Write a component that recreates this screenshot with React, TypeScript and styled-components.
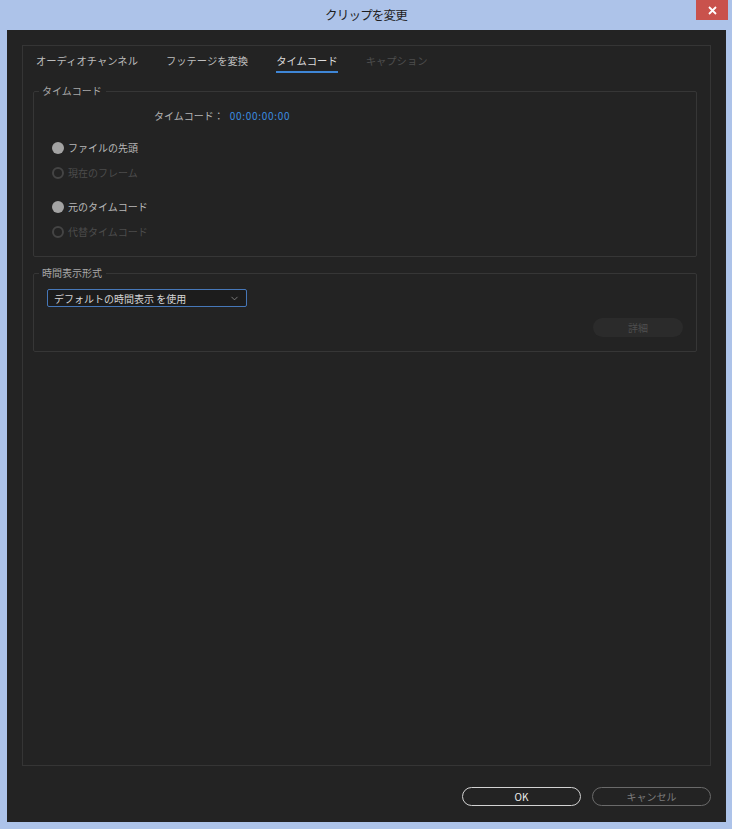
import styled, { createGlobalStyle } from 'styled-components';
import { ChevronDown } from 'lucide-react';

const GlobalStyle = createGlobalStyle`
  html, body {
    margin: 0;
    padding: 0;
    background: #adc3e9;
  }
  * {
    box-sizing: border-box;
  }
  body {
    font-family: "Noto Sans CJK JP", "Noto Sans", sans-serif;
  }
`;

const tabs = [
  { label: 'オーディオチャンネル', state: 'normal' },
  { label: 'フッテージを変換', state: 'normal' },
  { label: 'タイムコード', state: 'active' },
  { label: 'キャプション', state: 'disabled' },
] as const;

type TabState = 'normal' | 'active' | 'disabled';

const Window = styled.div`
  width: 732px;
  height: 829px;
  display: flex;
  flex-direction: column;
  background: #adc3e9;
`;

const TitleBar = styled.div`
  height: 30px;
  display: grid;
  grid-template-columns: 1fr auto 1fr;
  align-items: start;
`;

const Title = styled.div`
  grid-column: 2;
  margin-top: 6px;
  font-size: 12.5px;
  line-height: 18px;
  letter-spacing: -0.8px;
  color: #1e1e1e;
`;

const CloseButton = styled.div`
  grid-column: 3;
  justify-self: end;
  margin-right: 4px;
  width: 32px;
  height: 20px;
  background: #c9524c;
  display: flex;
  align-items: center;
  justify-content: center;
`;

const Body = styled.div`
  flex: 1;
  margin: 0 6px 7px 7px;
  background: #232323;
  padding: 15px 15px 0 15px;
  display: flex;
  flex-direction: column;
`;

const Panel = styled.div`
  flex: 1;
  border: 1px solid #353535;
  padding: 8px 13px 0 10px;
  display: flex;
  flex-direction: column;
`;

const TabRow = styled.div`
  display: flex;
  gap: 28px;
  margin-left: 3px;
`;

const Tab = styled.div<{ $state: TabState }>`
  font-size: 10.3px;
  line-height: 14px;
  padding-bottom: 3px;
  white-space: nowrap;
  color: ${(p) =>
    p.$state === 'disabled' ? '#4e4e4e' : p.$state === 'active' ? '#dcdcdc' : '#bdbdbd'};
  border-bottom: 2px solid
    ${(p) => (p.$state === 'active' ? '#3f86d6' : 'transparent')};
`;

const Group = styled.fieldset<{ $top: number }>`
  margin: ${(p) => p.$top}px 0 0 0;
  padding: 0 13px 0 5px;
  border: 1px solid #363636;
  border-radius: 2px;
  min-width: 0;
`;

const Legend = styled.legend`
  padding: 0 4px 0 3px;
  font-size: 10px;
  line-height: 14px;
  color: #a8a8a8;
`;

const TimecodeRow = styled.div`
  margin: 11px 0 0 115px;
  display: flex;
  gap: 6px;
  font-size: 10px;
  line-height: 14px;
`;

const TimecodeLabel = styled.span`
  color: #b4b4b4;
`;

const TimecodeValue = styled.span`
  color: #3b8ee0;
  letter-spacing: 0.7px;
`;

const RadioList = styled.div<{ $top: number }>`
  margin: ${(p) => p.$top}px 0 0 13px;
  display: flex;
  flex-direction: column;
  gap: 11px;
`;

const RadioRow = styled.div<{ $disabled?: boolean }>`
  display: flex;
  align-items: center;
  gap: 4px;
  height: 14px;
  font-size: 10px;
  line-height: 14px;
  color: ${(p) => (p.$disabled ? '#4c4c4c' : '#b8b8b8')};
`;

const RadioDot = styled.span<{ $checked?: boolean }>`
  width: 12px;
  height: 12px;
  border-radius: 50%;
  background: ${(p) => (p.$checked ? '#a3a3a3' : 'transparent')};
  border: ${(p) => (p.$checked ? 'none' : '2px solid #444444')};
`;

const GroupBottom = styled.div<{ $height: number }>`
  height: ${(p) => p.$height}px;
`;

const Select = styled.div`
  margin: 9px 0 0 8px;
  width: 200px;
  height: 18px;
  border: 1px solid #4677b8;
  border-radius: 2px;
  background: #1c1c1c;
  display: flex;
  align-items: center;
  justify-content: space-between;
  padding: 0 6px 0 6px;
  font-size: 10px;
  color: #d6d6d6;
`;

const ButtonRow = styled.div`
  display: flex;
  justify-content: flex-end;
  margin-top: 11px;
`;

const DetailButton = styled.div`
  width: 90px;
  height: 19px;
  border-radius: 10px;
  background: #2b2b2b;
  display: flex;
  align-items: center;
  justify-content: center;
  font-size: 10px;
  color: #4f4f4f;
`;

const Footer = styled.div`
  height: 56px;
  display: flex;
  justify-content: flex-end;
  align-items: flex-start;
  gap: 11px;
  padding-top: 21px;
`;

const PillButton = styled.div<{ $primary?: boolean }>`
  width: 119px;
  height: 19px;
  border-radius: 10px;
  border: 1px solid ${(p) => (p.$primary ? '#d2d2d2' : '#6a6a6a')};
  display: flex;
  align-items: center;
  justify-content: center;
  font-size: 10px;
  color: ${(p) => (p.$primary ? '#ececec' : '#7c7c7c')};
`;

export default function App() {
  return (
    <Window>
      <GlobalStyle />
      <TitleBar>
        <Title>クリップを変更</Title>
        <CloseButton>
          <svg width="9" height="9" viewBox="0 0 9 9">
            <path d="M1 1 L8 8 M8 1 L1 8" stroke="#ffffff" strokeWidth="1.8" />
          </svg>
        </CloseButton>
      </TitleBar>
      <Body>
        <Panel>
          <TabRow>
            {tabs.map((t) => (
              <Tab key={t.label} $state={t.state}>
                {t.label}
              </Tab>
            ))}
          </TabRow>
          <Group $top={11}>
            <Legend>タイムコード</Legend>
            <TimecodeRow>
              <TimecodeLabel>タイムコード：</TimecodeLabel>
              <TimecodeValue>00:00:00:00</TimecodeValue>
            </TimecodeRow>
            <RadioList $top={18}>
              <RadioRow>
                <RadioDot $checked />
                ファイルの先頭
              </RadioRow>
              <RadioRow $disabled>
                <RadioDot />
                現在のフレーム
              </RadioRow>
            </RadioList>
            <RadioList $top={20}>
              <RadioRow>
                <RadioDot $checked />
                元のタイムコード
              </RadioRow>
              <RadioRow $disabled>
                <RadioDot />
                代替タイムコード
              </RadioRow>
            </RadioList>
            <GroupBottom $height={17} />
          </Group>
          <Group $top={9}>
            <Legend>時間表示形式</Legend>
            <Select>
              <span>デフォルトの時間表示 を使用</span>
              <ChevronDown size={11} color="#a0a0a0" strokeWidth={1.5} />
            </Select>
            <ButtonRow>
              <DetailButton>詳細</DetailButton>
            </ButtonRow>
            <GroupBottom $height={14} />
          </Group>
        </Panel>
        <Footer>
          <PillButton $primary>OK</PillButton>
          <PillButton>キャンセル</PillButton>
        </Footer>
      </Body>
    </Window>
  );
}
